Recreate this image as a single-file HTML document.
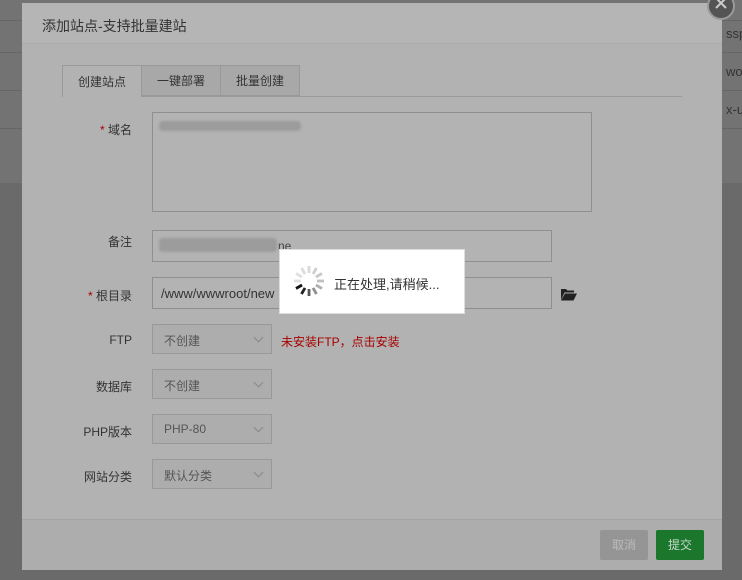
<!DOCTYPE html>
<html><head><meta charset="utf-8"><style>
*{box-sizing:border-box;margin:0;padding:0}
body{width:742px;height:580px;overflow:hidden;background:#6a6a6a;font-family:"Liberation Sans","Noto Sans CJK SC",sans-serif;font-size:12px;color:#444;position:relative}
.abs{position:absolute;white-space:nowrap}
.top{left:0;top:0;width:742px;height:183px;background:#737373}
.rl{height:1px;background:#666;left:0;width:742px}
.dlg{left:22px;top:3px;width:700px;height:567px;background:#b2b2b2}
.hd{left:0;top:0;width:700px;height:41px;background:#b5b5b5;border-bottom:1px solid #aaa}
.ft{left:0;top:516px;width:700px;height:51px;background:#acadac;border-top:1px solid #a3a3a3}
.lbl{width:110px;text-align:right;font-size:12px;color:#333}
.inp{border:1px solid #8f8f8f;background:#b3b3b3}
.sel{border:1px solid #999;background:#adadad;width:120px;height:30px;color:#555;padding:7px 11px;font-size:12px}
.sel:after{content:"";position:absolute;right:9px;top:9px;width:6px;height:6px;border-right:1px solid #888;border-bottom:1px solid #888;transform:rotate(45deg)}
.star{color:#a00}
</style></head><body>
<div class="abs top"></div>
<div class="abs rl" style="top:20px"></div>
<div class="abs rl" style="top:52px"></div>
<div class="abs rl" style="top:90px"></div>
<div class="abs rl" style="top:128px"></div>
<div class="abs" style="left:726px;top:26px;font-size:13px;color:#333">ssp</div>
<div class="abs" style="left:726px;top:64px;font-size:13px;color:#333">wo</div>
<div class="abs" style="left:726px;top:102px;font-size:13px;color:#333">x-u</div>
<div class="abs dlg">
 <div class="abs hd"><div class="abs" style="left:20px;top:13px;font-size:14px;color:#333">添加站点-支持批量建站</div></div>
 <div class="abs" style="left:40px;top:93px;width:620px;height:1px;background:#999"></div>
 <div class="abs" style="left:40px;top:62px;width:80px;height:32px;border:1px solid #999;border-bottom:none;background:#b2b2b2;text-align:center;line-height:32px;color:#333">创建站点</div>
 <div class="abs" style="left:119px;top:62px;width:80px;height:31px;border:1px solid #999;background:#a8a8a8;text-align:center;line-height:30px;color:#333">一键部署</div>
 <div class="abs" style="left:198px;top:62px;width:80px;height:31px;border:1px solid #999;background:#a8a8a8;text-align:center;line-height:30px;color:#333">批量创建</div>

 <div class="abs lbl" style="left:0;top:118px"><span class="star">*</span> 域名</div>
 <div class="abs inp" style="left:130px;top:109px;width:440px;height:100px"></div>
 <div class="abs" style="left:137px;top:118px;width:142px;height:10px;background:#9c9c9c;border-radius:4px;filter:blur(1px)"></div>

 <div class="abs lbl" style="left:0;top:230px">备注</div>
 <div class="abs inp" style="left:130px;top:227px;width:400px;height:32px"></div>
 <div class="abs" style="left:137px;top:235px;width:118px;height:14px;background:#9c9c9c;border-radius:4px;filter:blur(1px)"></div>
 <div class="abs" style="left:256px;top:236px;color:#444">ne</div>

 <div class="abs lbl" style="left:0;top:284px"><span class="star">*</span> 根目录</div>
 <div class="abs inp" style="left:130px;top:274px;width:400px;height:32px"></div>
 <div class="abs" style="left:139px;top:283px;color:#333;font-size:13px">/www/wwwroot/new</div>
 <svg class="abs" style="left:539px;top:285px" width="16" height="13" viewBox="0 0 16 13"><path d="M0 1h5l1.5 1.5H13v2H3.5L0 12z" fill="#222"/><path d="M4 5.5h12l-3.5 7H0z" fill="#222"/></svg>

 <div class="abs lbl" style="left:0;top:330px">FTP</div>
 <div class="abs sel" style="left:130px;top:321px">不创建</div>
 <div class="abs" style="left:259px;top:330px;color:#a80000">未安装FTP，点击安装</div>

 <div class="abs lbl" style="left:0;top:375px">数据库</div>
 <div class="abs sel" style="left:130px;top:366px">不创建</div>
 <div class="abs lbl" style="left:0;top:420px">PHP版本</div>
 <div class="abs sel" style="left:130px;top:411px">PHP-80</div>
 <div class="abs lbl" style="left:0;top:465px">网站分类</div>
 <div class="abs sel" style="left:130px;top:456px">默认分类</div>

 <div class="abs ft"></div>
 <div class="abs" style="left:578px;top:527px;width:48px;height:30px;background:#959595;border-radius:2px;color:#bbb;text-align:center;line-height:30px">取消</div>
 <div class="abs" style="left:634px;top:527px;width:48px;height:30px;background:#1a772c;border-radius:2px;color:#c9d8cc;text-align:center;line-height:30px">提交</div>
</div>
<div class="abs" style="left:707px;top:-8px;width:28px;height:28px;border-radius:50%;background:#545454;border:2px solid #9a9a9a"></div>
<svg class="abs" style="left:713px;top:-3px" width="16" height="16"><path d="M3 1L13 11M13 1L3 11" stroke="#ccc" stroke-width="2"/></svg>

<div class="abs" style="left:279px;top:249px;width:186px;height:65px;background:#fff;border:1px solid #ddd"></div>
<svg class="abs" style="left:292px;top:264px" width="34" height="34" viewBox="-17 -17 34 34">
 <g stroke-width="2.8" stroke-linecap="butt">
 <line x1="0" y1="-15" x2="0" y2="-8" stroke="#d8d8d8" transform="rotate(0)"/>
 <line x1="0" y1="-15" x2="0" y2="-8" stroke="#d0d0d0" transform="rotate(30)"/>
 <line x1="0" y1="-15" x2="0" y2="-8" stroke="#c8c8c8" transform="rotate(60)"/>
 <line x1="0" y1="-15" x2="0" y2="-8" stroke="#c0c0c0" transform="rotate(90)"/>
 <line x1="0" y1="-15" x2="0" y2="-8" stroke="#b0b0b0" transform="rotate(120)"/>
 <line x1="0" y1="-15" x2="0" y2="-8" stroke="#909090" transform="rotate(150)"/>
 <line x1="0" y1="-15" x2="0" y2="-8" stroke="#555" transform="rotate(180)"/>
 <line x1="0" y1="-15" x2="0" y2="-8" stroke="#222" transform="rotate(210)"/>
 <line x1="0" y1="-15" x2="0" y2="-8" stroke="#111" transform="rotate(240)"/>
 <line x1="0" y1="-15" x2="0" y2="-8" stroke="#e0e0e0" transform="rotate(270)"/>
 <line x1="0" y1="-15" x2="0" y2="-8" stroke="#e0e0e0" transform="rotate(300)"/>
 <line x1="0" y1="-15" x2="0" y2="-8" stroke="#dcdcdc" transform="rotate(330)"/>
 </g></svg>
<div class="abs" style="left:334px;top:274px;font-size:13px;color:#333">正在处理,请稍候...</div>
</body></html>
